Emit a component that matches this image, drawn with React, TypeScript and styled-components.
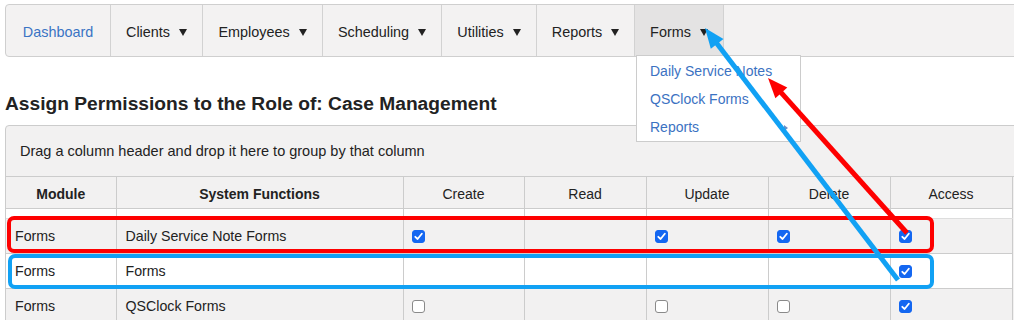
import React from 'react';
import styled, { createGlobalStyle } from 'styled-components';

const GlobalStyle = createGlobalStyle`
  html, body {
    margin: 0;
    padding: 0;
    background: #ffffff;
  }
  body {
    font-family: 'Liberation Sans', Arial, sans-serif;
    color: #222222;
  }
`;

const navItems = [
  { label: 'Dashboard', width: 105, link: true },
  { label: 'Clients', width: 92, caret: true },
  { label: 'Employees', width: 120, caret: true },
  { label: 'Scheduling', width: 119, caret: true },
  { label: 'Utilities', width: 95, caret: true },
  { label: 'Reports', width: 98, caret: true },
  { label: 'Forms', width: 89, caret: true, active: true },
];

const columns = [
  { label: 'Module', width: 110, bold: true },
  { label: 'System Functions', width: 287, bold: true },
  { label: 'Create', width: 121 },
  { label: 'Read', width: 122 },
  { label: 'Update', width: 122 },
  { label: 'Delete', width: 122 },
  { label: 'Access', width: 122 },
];

type Box = boolean | null;

const rows: { module: string; fn: string; boxes: Box[]; alt: boolean }[] = [
  { module: 'Forms', fn: 'Daily Service Note Forms', boxes: [true, null, true, true, true], alt: true },
  { module: 'Forms', fn: 'Forms', boxes: [null, null, null, null, true], alt: false },
  { module: 'Forms', fn: 'QSClock Forms', boxes: [false, null, false, false, true], alt: true },
];

const Page = styled.div`
  position: relative;
  width: 1014px;
  height: 320px;
  overflow: hidden;
  padding-left: 5px;
  box-sizing: border-box;
`;

const LogoStrip = styled.div`
  height: 4px;
  padding-left: 36px;
  overflow: hidden;
`;

const Nav = styled.nav`
  display: flex;
  width: 1040px;
  height: 53px;
  background: #f3f2f2;
  border: 1px solid #cfcfcf;
  border-radius: 4px;
  box-sizing: border-box;
`;

const NavItem = styled.div<{ $active?: boolean; $link?: boolean }>`
  display: flex;
  align-items: center;
  justify-content: center;
  gap: 9px;
  height: 100%;
  padding-top: 2px;
  box-sizing: border-box;
  border-right: 1px solid #d2d2d2;
  font-size: 14.4px;
  color: ${(p) => (p.$link ? '#3a74c4' : '#222222')};
  background: ${(p) => (p.$active ? '#e4e3e3' : 'transparent')};
`;

const Caret = styled.span`
  display: inline-block;
  width: 0;
  height: 0;
  border-left: 4px solid transparent;
  border-right: 4px solid transparent;
  border-top: 7px solid #222222;
  margin-top: 1px;
`;

const Dropdown = styled.div`
  position: absolute;
  left: 636px;
  top: 55px;
  width: 165px;
  height: 87px;
  box-sizing: border-box;
  background: #ffffff;
  border: 1px solid #cccccc;
  padding-top: 1px;
  z-index: 2;
`;

const MenuLink = styled.div`
  position: relative;
  height: 28px;
  line-height: 28px;
  padding-left: 13px;
  font-size: 14px;
  color: #3b72c2;
`;

const SubCaret = styled.span`
  position: absolute;
  right: 12px;
  top: 12px;
  width: 0;
  height: 0;
  border-top: 3px solid transparent;
  border-bottom: 3px solid transparent;
  border-left: 4px solid #6d8fc4;
`;

const Heading = styled.h2`
  margin: 36px 0 0;
  height: 32px;
  font-size: 19.2px;
  font-weight: bold;
  line-height: 22px;
  color: #222222;
`;

const Grid = styled.div`
  width: 1030px;
  border: 1px solid #cccccc;
  border-radius: 4px 0 0 0;
  background: #f2f1f1;
`;

const GroupPanel = styled.div`
  height: 50px;
  display: flex;
  align-items: center;
  padding-left: 14px;
  font-size: 14.5px;
  color: #222222;
  border-bottom: 1px solid #cccccc;
`;

const Table = styled.table`
  border-collapse: collapse;
  table-layout: fixed;
  width: 1006px;
`;

const Th = styled.th<{ $bold?: boolean }>`
  height: 29px;
  padding: 2px 0 0;
  font-size: 14px;
  font-weight: ${(p) => (p.$bold ? 'bold' : 'normal')};
  color: #222222;
  text-align: center;
  border-right: 1px solid #cccccc;
  border-bottom: 1px solid #cccccc;
`;

const SpacerCell = styled.td`
  height: 9px;
  padding: 0;
  background: #ffffff;
  border-right: 1px solid #cccccc;
  border-bottom: 1px solid #dddddd;
`;

const Tr = styled.tr<{ $alt: boolean }>`
  background: ${(p) => (p.$alt ? '#f2f1f1' : '#ffffff')};
`;

const Td = styled.td`
  height: 34px;
  padding: 0 9px;
  font-size: 14.2px;
  color: #222222;
  border-right: 1px solid #cccccc;
  border-bottom: 1px solid #cccccc;
  white-space: nowrap;
`;

const BoxCell = styled.td`
  height: 34px;
  padding: 0 0 0 8px;
  border-right: 1px solid #cccccc;
  border-bottom: 1px solid #cccccc;
`;

const CheckBox = styled.span<{ $checked: boolean }>`
  display: flex;
  align-items: center;
  justify-content: center;
  width: 13px;
  height: 13px;
  box-sizing: border-box;
  border-radius: 3px;
  background: ${(p) => (p.$checked ? '#1467f1' : '#ffffff')};
  border: 1px solid ${(p) => (p.$checked ? '#1467f1' : '#8a8a8a')};
`;

const Overlay = styled.svg`
  position: absolute;
  left: 0;
  top: 0;
  z-index: 3;
  pointer-events: none;
`;

function Check({ checked }: { checked: boolean }) {
  return (
    <CheckBox $checked={checked}>
      {checked && (
        <svg width="9" height="9" viewBox="0 0 9 9">
          <path d="M1.3 4.8 L3.6 7 L7.8 1.8" fill="none" stroke="#ffffff" strokeWidth="1.8" strokeLinecap="round" strokeLinejoin="round" />
        </svg>
      )}
    </CheckBox>
  );
}

function Arrow({ x1, y1, x2, y2, color }: { x1: number; y1: number; x2: number; y2: number; color: string }) {
  const a = Math.atan2(y2 - y1, x2 - x1);
  const len = 20;
  const half = 8;
  const bx = x2 - len * Math.cos(a);
  const by = y2 - len * Math.sin(a);
  const nx = -Math.sin(a);
  const ny = Math.cos(a);
  const head = `${x2},${y2} ${bx + nx * half},${by + ny * half} ${bx - nx * half},${by - ny * half}`;
  return (
    <g>
      <line x1={x1} y1={y1} x2={bx + 2 * Math.cos(a)} y2={by + 2 * Math.sin(a)} stroke={color} strokeWidth="5" />
      <polygon points={head} fill={color} />
    </g>
  );
}

export default function App() {
  return (
    <>
      <GlobalStyle />
      <Page>
        <LogoStrip>
          <svg width="40" height="4" viewBox="0 0 40 4">
            <path d="M0 0 Q20 6 40 0 Z" fill="#bdbdbd" />
          </svg>
        </LogoStrip>
        <Nav>
          {navItems.map((n) => (
            <NavItem key={n.label} $active={n.active} $link={n.link} style={{ width: n.width }}>
              <span>{n.label}</span>
              {n.caret && <Caret />}
            </NavItem>
          ))}
        </Nav>
        <Dropdown>
          <MenuLink>Daily Service Notes</MenuLink>
          <MenuLink>QSClock Forms</MenuLink>
          <MenuLink>
            Reports
            <SubCaret />
          </MenuLink>
        </Dropdown>
        <Heading>Assign Permissions to the Role of: Case Management</Heading>
        <Grid>
          <GroupPanel>Drag a column header and drop it here to group by that column</GroupPanel>
          <Table>
            <colgroup>
              {columns.map((c) => (
                <col key={c.label} style={{ width: c.width }} />
              ))}
            </colgroup>
            <thead>
              <tr>
                {columns.map((c) => (
                  <Th key={c.label} $bold={c.bold}>
                    {c.label}
                  </Th>
                ))}
              </tr>
            </thead>
            <tbody>
              <tr>
                {columns.map((c) => (
                  <SpacerCell key={c.label} />
                ))}
              </tr>
              {rows.map((r, i) => (
                <Tr key={i} $alt={r.alt}>
                  <Td>{r.module}</Td>
                  <Td>{r.fn}</Td>
                  {r.boxes.map((b, j) => (
                    <BoxCell key={j}>{b !== null && <Check checked={b} />}</BoxCell>
                  ))}
                </Tr>
              ))}
            </tbody>
          </Table>
        </Grid>
        <Overlay width="1014" height="320" viewBox="0 0 1014 320">
          <rect x="9" y="218" width="923" height="33" rx="5" fill="none" stroke="#fe0000" strokeWidth="4" />
          <rect x="10" y="256" width="922" height="31" rx="5" fill="none" stroke="#11a1f4" strokeWidth="4" />
          <Arrow x1={907} y1={233} x2={768} y2={78} color="#fe0000" />
          <Arrow x1={898} y1={280} x2={705} y2={28} color="#11a1f4" />
        </Overlay>
      </Page>
    </>
  );
}
